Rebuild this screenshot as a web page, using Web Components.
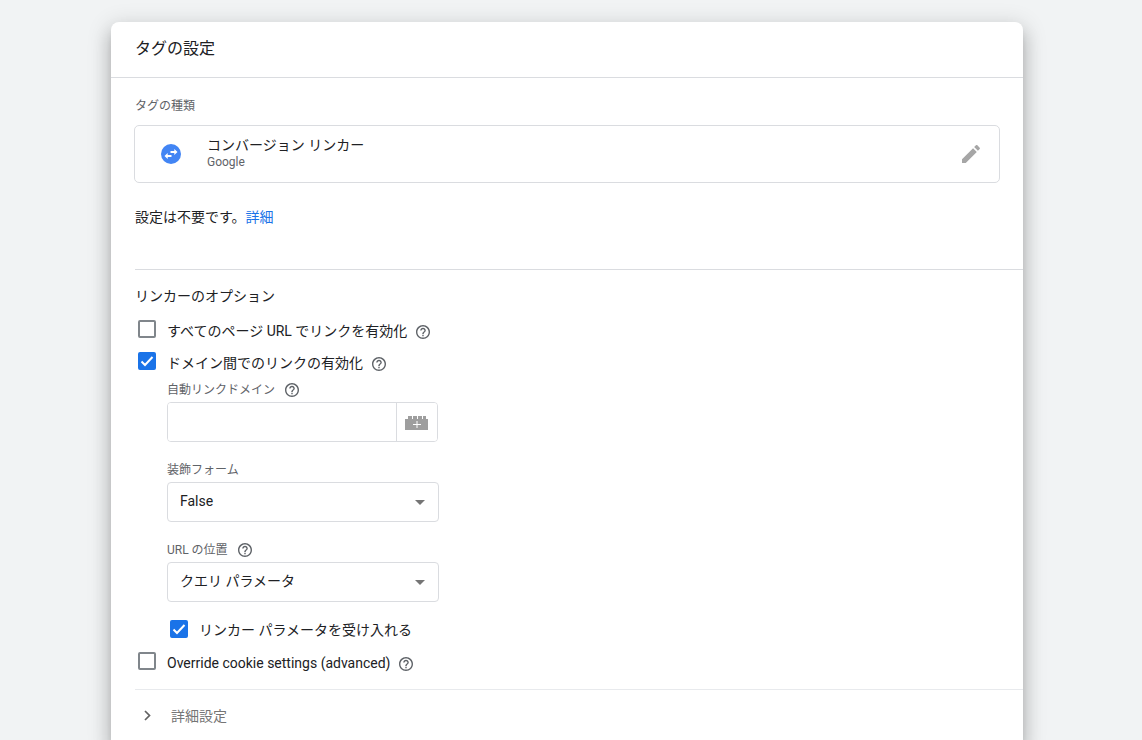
<!DOCTYPE html>
<html lang="ja">
<head>
<meta charset="utf-8">
<title>タグの設定</title>
<style>
  html { background: #f1f3f4; }
  body {
    margin: 0;
    font: 14px/20px Roboto, "Noto Sans CJK JP", sans-serif;
    font-weight: 400;
    color: #202124;
    --line: #dadce0;
    --muted: #5f6368;
    --blue: #1a73e8;
  }
</style>
</head>
<body>
<tag-page></tag-page>

<template id="t-page">
  <style>
    :host { display: flex; box-sizing: border-box; min-height: 100vh; padding: 22px 119px 0 111px; }
    tag-card { flex: 1; min-width: 0; }
    .note { margin: 24px 0 0; }
    a { color: var(--blue); text-decoration: none; }
    h3 { margin: 0 0 8px; font-size: 14px; font-weight: 400; }
    .nested { padding: 2px 0 0 32px; display: flex; flex-direction: column; gap: 18px; }
    .nested-check { padding-left: 32px; margin-top: 12px; --label-top: 0; }
  </style>
  <tag-card heading="タグの設定">
    <tag-section style="--top: 18px; --bottom: 42px">
      <tag-type label="タグの種類" name="コンバージョン リンカー" vendor="Google"></tag-type>
      <p class="note">設定は不要です。<a href="#details">詳細</a></p>
    </tag-section>
    <tag-section ruled style="--top: 16px; --bottom: 11px">
      <h3>リンカーのオプション</h3>
      <check-row label="すべてのページ URL でリンクを有効化" help></check-row>
      <check-row label="ドメイン間でのリンクの有効化" help checked></check-row>
      <div class="nested">
        <text-field label="自動リンクドメイン" help></text-field>
        <select-field label="装飾フォーム" options="False,True"></select-field>
        <select-field label="URL の位置" options="クエリ パラメータ,フラグメント" help></select-field>
      </div>
      <check-row class="nested-check" label="リンカー パラメータを受け入れる" checked></check-row>
      <check-row label="Override cookie settings (advanced)" help></check-row>
    </tag-section>
    <tag-section ruled style="--top: 8px; --bottom: 8px; --rule: #e8eaed">
      <expand-row>詳細設定</expand-row>
    </tag-section>
  </tag-card>
</template>

<template id="t-card">
  <style>
    :host {
      display: block; background: #fff; border-radius: 8px 8px 0 0;
      box-shadow: 0 7px 8px -4px rgba(0,0,0,.2), 0 12px 17px 2px rgba(0,0,0,.14), 0 5px 22px 4px rgba(0,0,0,.12);
    }
    header { padding: 15px 24px 16px; border-bottom: 1px solid var(--line); }
    h2 { margin: 0; font-size: 16px; line-height: 24px; font-weight: 400; }
  </style>
  <header><h2></h2></header>
  <slot></slot>
</template>

<template id="t-section">
  <style>
    :host { display: block; margin-left: 24px; padding: var(--top) 24px var(--bottom) 0; }
    :host([ruled]) { border-top: 1px solid var(--rule, var(--line)); }
  </style>
  <slot></slot>
</template>

<template id="t-type">
  <style>
    :host { display: block; }
    .label { font-size: 12px; color: var(--muted); margin-bottom: 9px; }
    .box {
      display: flex; align-items: center; box-sizing: border-box; height: 58px; margin: 0 -1px;
      padding: 0 16px 0 24px; border: 1px solid var(--line); border-radius: 5px;
    }
    .logo { width: 24px; height: 24px; margin-right: 24px; flex: none; }
    .text { flex: 1; padding-bottom: 3px; }
    .name { line-height: 18px; }
    .vendor { font-size: 12px; line-height: 16px; color: var(--muted); }
    button { display: block; border: 0; background: none; padding: 0; width: 24px; height: 24px; color: #a6a6a6; }
  </style>
  <div class="label"></div>
  <div class="box">
    <svg class="logo" viewBox="0 0 24 24" aria-hidden="true">
      <circle cx="12" cy="12" r="10" fill="#4285f4"/>
      <path fill="#fff" d="M11.500 9h3.800V7l3.200 3-3.200 3v-2h-3.800zM12.500 13v2H8.700v2l-3.200-3 3.200-3v2z"/>
    </svg>
    <div class="text"><div class="name"></div><div class="vendor"></div></div>
    <button aria-label="編集">
      <svg viewBox="0 0 24 24" width="24" height="24" fill="currentColor"><path d="M3 17.250V21h3.750L17.810 9.940l-3.750-3.750L3 17.250zM20.710 7.040c.39-.39.39-1.020 0-1.410l-2.340-2.340c-.39-.39-1.020-.39-1.410 0l-1.830 1.830 3.750 3.750 1.830-1.830z"/></svg>
    </button>
  </div>
</template>

<template id="t-help">
  <style>
    :host { display: block; width: 14px; height: 14px; color: var(--muted); }
    svg { display: block; }
  </style>
  <svg viewBox="2 2 20 20" width="14" height="14" fill="currentColor" role="img" aria-label="ヘルプ"><path d="M11 18h2v-2h-2v2zm1-16C6.480 2 2 6.480 2 12s4.480 10 10 10 10-4.480 10-10S17.520 2 12 2zm0 18c-4.410 0-8-3.590-8-8s3.590-8 8-8 8 3.590 8 8-3.590 8-8 8zm0-14c-2.210 0-4 1.790-4 4h2c0-1.100.9-2 2-2s2 .9 2 2c0 2-3 1.750-3 5h2c0-2.250 3-2.500 3-5 0-2.210-1.790-4-4-4z"/></svg>
</template>

<template id="t-check">
  <style>
    :host { display: flex; align-items: center; height: 32px; }
    .tick { display: grid; width: 18px; height: 18px; margin: 0 11px 2px 3px; flex: none; }
    .tick > * { grid-area: 1 / 1; }
    input {
      appearance: none; box-sizing: border-box; width: 18px; height: 18px; margin: 0;
      border: 2px solid #80868b; border-radius: 2px; background: #fff;
    }
    input:checked { border-color: var(--blue); background: var(--blue); }
    svg { width: 18px; height: 18px; pointer-events: none; visibility: hidden; }
    input:checked + svg { visibility: visible; }
    label { padding-top: var(--label-top, 2px); }
    help-icon { margin: 4px 0 0 9px; }
  </style>
  <span class="tick">
    <input type="checkbox" id="c">
    <svg viewBox="0 0 18 18" fill="none" stroke="#fff" stroke-width="2"><path d="M3.500 9.500l3.500 3.500 7.500-8"/></svg>
  </span>
  <label for="c"></label>
</template>

<template id="t-text">
  <style>
    :host { display: block; }
    .head { display: flex; align-items: center; height: 20px; margin-bottom: 2px; }
    label { font-size: 12px; color: var(--muted); }
    help-icon { margin-left: 10px; }
    .box { display: flex; box-sizing: border-box; width: 271px; max-width: 100%; height: 40px; border: 1px solid var(--line); border-radius: 4px; overflow: hidden; }
    input { flex: 1; min-width: 0; border: 0; padding: 0 12px; font: inherit; color: inherit; outline: 0; background: #fff; }
    button { box-sizing: border-box; width: 41px; border: 0; border-left: 1px solid var(--line); background: #fff; padding: 0; display: grid; place-items: center; }
    svg { display: block; }
  </style>
  <div class="head"><label for="i"></label></div>
  <div class="box">
    <input id="i" type="text">
    <button aria-label="変数を選択">
      <svg width="24" height="16" viewBox="0 0 24 16"><path fill="#9e9e9e" d="M0 5h3V2h4v3h1V2h4v3h1V2h4v3h1V2h3v3h2v11H0z"/><path stroke="#fff" d="M12 7v7M8 10.500h8"/></svg>
    </button>
  </div>
</template>

<template id="t-select">
  <style>
    :host { display: block; }
    .head { display: flex; align-items: center; height: 20px; margin-bottom: 2px; }
    label { font-size: 12px; color: var(--muted); }
    help-icon { margin-left: 10px; }
    .box { display: grid; width: 272px; max-width: 100%; height: 40px; align-items: center; }
    .box > * { grid-area: 1 / 1; }
    select {
      appearance: none; box-sizing: border-box; width: 100%; height: 40px; margin: 0; padding: 0 40px 2px 12px;
      border: 1px solid var(--line); border-radius: 4px; background: #fff; font: inherit; color: inherit;
    }
    svg { justify-self: end; margin-right: 14px; pointer-events: none; }
  </style>
  <div class="head"><label for="s"></label></div>
  <div class="box">
    <select id="s"></select>
    <svg width="10" height="5" viewBox="0 0 10 5"><path fill="#757575" d="M0 0h10L5 5z"/></svg>
  </div>
</template>

<template id="t-expand">
  <style>
    :host { display: block; }
    button { display: flex; align-items: center; height: 36px; border: 0; background: none; padding: 0; font: inherit; color: #757575; }
    svg { width: 24px; height: 24px; margin-right: 12px; }
  </style>
  <button aria-expanded="false">
    <svg viewBox="0 0 24 24" fill="none" stroke="#616161" stroke-width="1.700"><path d="M10 7l4.500 4.500L10 16"/></svg>
    <slot></slot>
  </button>
</template>

<script>
  class Base extends HTMLElement {
    constructor() {
      super();
      const source = document.getElementById(this.constructor.template);
      this.attachShadow({ mode: "open" }).append(source.content.cloneNode(true));
    }
    $(selector) { return this.shadowRoot.querySelector(selector); }
    setLabel() {
      const label = this.$("label");
      label.textContent = this.getAttribute("label");
      if (this.hasAttribute("help") && !this.$("help-icon")) {
        label.after(document.createElement("help-icon"));
      }
    }
  }
  class HelpIcon extends Base { static template = "t-help"; }
  class TagSection extends Base { static template = "t-section"; }
  class ExpandRow extends Base { static template = "t-expand"; }
  class TagCard extends Base {
    static template = "t-card";
    connectedCallback() { this.$("h2").textContent = this.getAttribute("heading"); }
  }
  class TagType extends Base {
    static template = "t-type";
    connectedCallback() {
      for (const key of ["label", "name", "vendor"]) this.$("." + key).textContent = this.getAttribute(key);
    }
  }
  class CheckRow extends Base {
    static template = "t-check";
    connectedCallback() {
      this.setLabel();
      this.$("input").checked = this.hasAttribute("checked");
    }
  }
  class TextField extends Base {
    static template = "t-text";
    connectedCallback() { this.setLabel(); }
  }
  class SelectField extends Base {
    static template = "t-select";
    connectedCallback() {
      this.setLabel();
      this.$("select").replaceChildren(...this.getAttribute("options").split(",").map(text => new Option(text)));
    }
  }
  class TagPage extends Base { static template = "t-page"; }

  customElements.define("help-icon", HelpIcon);
  customElements.define("tag-section", TagSection);
  customElements.define("expand-row", ExpandRow);
  customElements.define("tag-card", TagCard);
  customElements.define("tag-type", TagType);
  customElements.define("check-row", CheckRow);
  customElements.define("text-field", TextField);
  customElements.define("select-field", SelectField);
  customElements.define("tag-page", TagPage);
</script>
</body>
</html>
